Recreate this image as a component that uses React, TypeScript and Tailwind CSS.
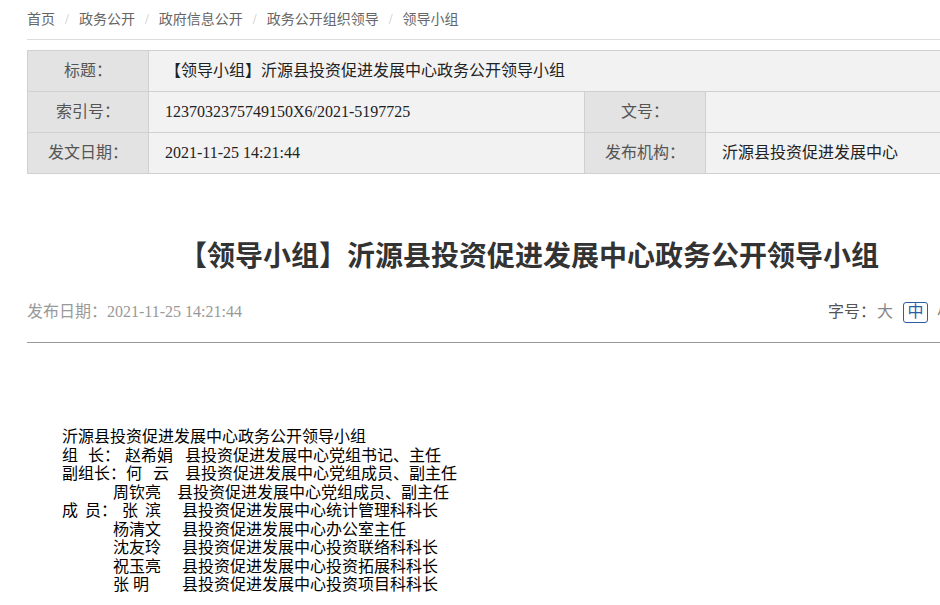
import React from "react";

const crumbs = ["首页", "政务公开", "政府信息公开", "政务公开组织领导", "领导小组"];

function Crumbs() {
  return (
    <div className="flex items-center h-[40px] text-[14px] text-[#666] border-b border-[#dcdcdc]">
      {crumbs.map((c, i) => (
        <React.Fragment key={i}>
          {i > 0 && <span className="mx-[10px] text-[#c8c8c8]">/</span>}
          <span>{c}</span>
        </React.Fragment>
      ))}
    </div>
  );
}

function InfoTable() {
  const label = "bg-[#e3e3e3] text-[#555] text-center border border-[#d0d0d0]";
  const value = "bg-[#f2f2f2] text-[#222] pl-[16px] border border-[#d0d0d0]";
  return (
    <table className="mt-[10px] w-full border-collapse text-[16px] table-fixed">
      <colgroup>
        <col className="w-[121px]" />
        <col className="w-[436px]" />
        <col className="w-[121px]" />
        <col />
      </colgroup>
      <tbody>
        <tr className="h-[41px]">
          <td className={label}>标题：</td>
          <td className={value} colSpan={3}>
            【领导小组】沂源县投资促进发展中心政务公开领导小组
          </td>
        </tr>
        <tr className="h-[41px]">
          <td className={label}>索引号：</td>
          <td className={value}>1237032375749150X6/2021-5197725</td>
          <td className={label}>文号：</td>
          <td className={value}></td>
        </tr>
        <tr className="h-[41px]">
          <td className={label}>发文日期：</td>
          <td className={value}>2021-11-25 14:21:44</td>
          <td className={label}>发布机构：</td>
          <td className={value}>沂源县投资促进发展中心</td>
        </tr>
      </tbody>
    </table>
  );
}

function Members() {
  return (
    <div className="mt-[85px] pl-[35px] text-[16px] leading-[18.5px] text-black whitespace-nowrap">
      <div>沂源县投资促进发展中心政务公开领导小组</div>
      <div className="flex">
        <span>组</span>
        <span className="ml-[10px]">长：</span>
        <span className="ml-[5px]">赵希娟</span>
        <span className="ml-[12px]">县投资促进发展中心党组书记、主任</span>
      </div>
      <div className="flex">
        <span>副组长：</span>
        <span>何</span>
        <span className="ml-[11px]">云</span>
        <span className="ml-[16px]">县投资促进发展中心党组成员、副主任</span>
      </div>
      <div className="flex">
        <span className="ml-[51px]">周钦亮</span>
        <span className="ml-[16px]">县投资促进发展中心党组成员、副主任</span>
      </div>
      <div className="flex">
        <span>成</span>
        <span className="ml-[7px]">员：</span>
        <span className="ml-[5px]">张</span>
        <span className="ml-[7px]">滨</span>
        <span className="ml-[21px]">县投资促进发展中心统计管理科科长</span>
      </div>
      <div className="flex">
        <span className="ml-[51px]">杨清文</span>
        <span className="ml-[21px]">县投资促进发展中心办公室主任</span>
      </div>
      <div className="flex">
        <span className="ml-[51px]">沈友玲</span>
        <span className="ml-[21px]">县投资促进发展中心投资联络科科长</span>
      </div>
      <div className="flex">
        <span className="ml-[51px]">祝玉亮</span>
        <span className="ml-[21px]">县投资促进发展中心投资拓展科科长</span>
      </div>
      <div className="flex">
        <span className="ml-[51px]">张</span>
        <span className="ml-[4px]">明</span>
        <span className="ml-[33px]">县投资促进发展中心投资项目科科长</span>
      </div>
    </div>
  );
}

export default function App() {
  return (
    <div
      className="w-full min-h-[605px] overflow-hidden bg-white"
      style={{ fontFamily: '"Liberation Serif", "Noto Sans CJK SC", serif' }}
    >
      <div className="ml-[27px] w-[1004px]">
        <Crumbs />
        <InfoTable />

        <h1 className="mt-[63px] text-center text-[28px] leading-[40px] font-bold text-[#333]">
          【领导小组】沂源县投资促进发展中心政务公开领导小组
        </h1>

        <div className="mt-[19px] flex items-center h-[32px] border-b border-[#999] pb-[14px] box-content">
          <div className="text-[16px] text-[#999]">发布日期：2021-11-25 14:21:44</div>
          <div className="ml-auto mr-[78px] flex items-center text-[16px]">
            <span className="text-[#555]">字号：</span>
            <span className="ml-[1px] text-[#888]">大</span>
            <span className="ml-[10px] w-[25px] h-[21px] flex items-center justify-center border border-[#2b5ea7] rounded-[3px] text-[#2b5ea7]">
              中
            </span>
            <span className="ml-[9px] text-[#888]">小</span>
          </div>
        </div>

        <Members />
      </div>
    </div>
  );
}
